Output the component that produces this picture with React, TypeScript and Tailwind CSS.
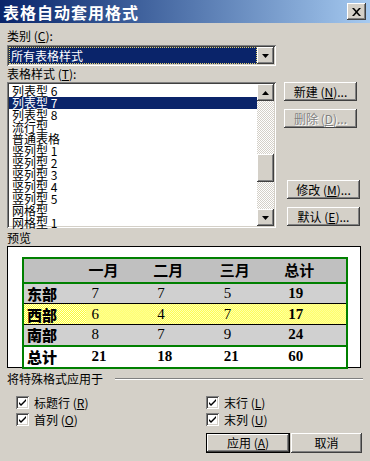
import type { ReactNode } from 'react';

const raised =
  'shadow-[inset_-1px_-1px_#404040,inset_1px_1px_#ffffff,inset_-2px_-2px_#808080,inset_2px_2px_#d4d0c8]';
const sunken =
  'shadow-[inset_1px_1px_#808080,inset_-1px_-1px_#ffffff,inset_2px_2px_#404040,inset_-2px_-2px_#d4d0c8]';

const font = "font-['Noto_Sans_CJK_SC','Noto_Sans',sans-serif]";

const listItems = [
  '列表型 6',
  '列表型 7',
  '列表型 8',
  '流行型',
  '普通表格',
  '竖列型 1',
  '竖列型 2',
  '竖列型 3',
  '竖列型 4',
  '竖列型 5',
  '网格型',
  '网格型 1',
];

const rows = [
  { name: '东部', values: [7, 7, 5, 19], bg: 'bg-[#d0d0d0]' },
  {
    name: '西部',
    values: [6, 4, 7, 17],
    bg: 'bg-[repeating-conic-gradient(#ffff33_0_25%,#ffffd0_0_50%)] bg-[length:2px_2px]',
  },
  { name: '南部', values: [8, 7, 9, 24], bg: 'bg-[#d0d0d0]' },
];

function Key({ children }: { children: ReactNode }) {
  return <span className="underline underline-offset-1">{children}</span>;
}

function Button({ label, k, className = '', disabled = false }: { label: string; k: string; className?: string; disabled?: boolean }) {
  return (
    <div
      className={`flex h-[19px] items-center justify-center bg-[#d4d0c8] text-[12px] leading-none ${raised} ${
        disabled ? 'text-[#808080] [text-shadow:1px_1px_#ffffff]' : 'text-black'
      } ${className}`}
    >
      {label} (<Key>{k}</Key>)...
    </div>
  );
}

function Arrow({ up }: { up?: boolean }) {
  return (
    <svg width="7" height="4" viewBox="0 0 7 4">
      <path d={up ? 'M3.5 0 L7 4 L0 4 Z' : 'M0 0 L7 0 L3.5 4 Z'} fill="#000" />
    </svg>
  );
}

function Check({ label, k }: { label: string; k: string }) {
  return (
    <div className="flex h-[13px] items-center gap-[5px] text-[12px] leading-none">
      <div className={`flex h-[13px] w-[13px] items-center justify-center bg-white ${sunken}`}>
        <svg width="7" height="7" viewBox="0 0 7 7">
          <path d="M0 3 L2 5 L7 0 L7 2 L2 7 L0 5 Z" fill="#000" />
        </svg>
      </div>
      <span>
        {label} (<Key>{k}</Key>)
      </span>
    </div>
  );
}

export default function App() {
  return (
    <div className={`h-[461px] w-[370px] overflow-hidden bg-[#d4d0c8] text-black ${font}`}>
      {/* title bar */}
      <div className="flex h-[23px] items-center justify-between bg-gradient-to-r from-[#0a246a] to-[#a6caf0] pl-[3px] pr-[4px]">
        <span className="text-[16px] font-bold leading-none tracking-[1px] text-white">表格自动套用格式</span>
        <div className={`flex h-[17px] w-[19px] items-center justify-center bg-[#d4d0c8] ${raised}`}>
          <svg width="9" height="8" viewBox="0 0 9 8">
            <path d="M0 0 L2 0 L4.5 2.8 L7 0 L9 0 L5.5 4 L9 8 L7 8 L4.5 5.2 L2 8 L0 8 L3.5 4 Z" fill="#000" />
          </svg>
        </div>
      </div>

      <div className="px-[7px]">
        <div className="mt-[7px] text-[12px] leading-[12px]">
          类别 (<Key>C</Key>):
        </div>
        <div className={`mt-[3px] flex h-[21px] w-[269px] items-center bg-white p-[2px] ${sunken}`}>
          <div className="flex h-full flex-1 items-center border border-dotted border-[#e0d070] bg-[#0a246a] px-[1px] text-[12px] leading-none text-white">
            所有表格样式
          </div>
          <div className={`flex h-[17px] w-[17px] items-center justify-center bg-[#d4d0c8] ${raised}`}>
            <Arrow />
          </div>
        </div>
        <div className="mt-[2px] text-[12px] leading-[12px]">
          表格样式 (<Key>T</Key>):
        </div>

        <div className="mt-[2px] flex">
          <div className={`flex h-[146px] w-[269px] bg-white p-[2px] ${sunken}`}>
            <div className="flex-1 pt-[1px]">
              {listItems.map((item, i) => (
                <div
                  key={item}
                  className={`h-[12px] pl-[3px] text-[12px] leading-[12px] ${i === 1 ? 'bg-[#0a246a] text-white' : ''}`}
                >
                  {item}
                </div>
              ))}
            </div>
            <div className="flex w-[17px] flex-col bg-[repeating-conic-gradient(#d4d0c8_0_25%,#ffffff_0_50%)] bg-[length:2px_2px]">
              <div className={`flex h-[17px] items-center justify-center bg-[#d4d0c8] ${raised}`}>
                <Arrow up />
              </div>
              <div className="h-[53px]" />
              <div className={`h-[28px] bg-[#d4d0c8] ${raised}`} />
              <div className="flex-1" />
              <div className={`flex h-[17px] items-center justify-center bg-[#d4d0c8] ${raised}`}>
                <Arrow />
              </div>
            </div>
          </div>
          <div className="ml-[8px] flex flex-col">
            <Button label="新建" k="N" className="w-[73px]" />
            <Button label="删除" k="D" className="mt-[8px] w-[73px]" disabled />
            <Button label="修改" k="M" className="ml-[3px] mt-[52px] w-[73px]" />
            <Button label="默认" k="E" className="ml-[3px] mt-[8px] w-[73px]" />
          </div>
        </div>

        <div className="mt-[4px] text-[12px] leading-[12px]">预览</div>
        <div className="mt-[2px] h-[122px] w-[354px] border border-black bg-white px-[14px] pt-[10px]">
          <table className="w-[326px] border-collapse">
            <colgroup>
              <col className="w-[63px]" />
              <col className="w-[66px]" />
              <col className="w-[67px]" />
              <col className="w-[65px]" />
              <col className="w-[65px]" />
            </colgroup>
            <tbody>
              <tr className="h-[23px] border-2 border-[#008000] bg-[#c0c0c0] text-[15px] font-bold">
                <td />
                <td className="pl-[3px]">一月</td>
                <td className="pl-[2px]">二月</td>
                <td className="pl-[2px]">三月</td>
                <td className="pl-[2px]">总计</td>
              </tr>
              {rows.map((r, ri) => (
                <tr
                  key={r.name}
                  className={`h-[21px] border-x-2 border-[#008000] ${ri > 0 ? 'border-t border-t-black' : ''} ${r.bg}`}
                >
                  <td className="pl-[3px] text-[15px] font-black leading-none">{r.name}</td>
                  {r.values.map((v, i) => (
                    <td
                      key={i}
                      className={`pl-[6px] font-['Liberation_Serif',serif] text-[15px] leading-none ${i === 3 ? 'font-bold' : ''}`}
                    >
                      {v}
                    </td>
                  ))}
                </tr>
              ))}
              <tr className="h-[22px] border-2 border-[#008000] bg-white">
                <td className="pl-[3px] text-[15px] font-black leading-none">总计</td>
                {[21, 18, 21, 60].map((v, i) => (
                  <td key={i} className="pl-[6px] font-['Liberation_Serif',serif] text-[15px] font-bold leading-none">
                    {v}
                  </td>
                ))}
              </tr>
            </tbody>
          </table>
        </div>

        <div className="mt-[4px] flex items-center gap-[12px]">
          <span className="text-[12px] leading-[14px]">将特殊格式应用于</span>
          <div className="h-[2px] flex-1 border-t border-b border-t-[#808080] border-b-white" />
        </div>

        <div className="mt-[10px] grid grid-cols-[190px_1fr] gap-y-[4px] pl-[9px]">
          <Check label="标题行" k="R" />
          <Check label="末行" k="L" />
          <Check label="首列" k="O" />
          <Check label="末列" k="U" />
        </div>

        <div className="mt-[7px] flex justify-end pr-[1px]">
          <div className="border border-black">
            <div className={`flex h-[18px] w-[82px] items-center justify-center bg-[#d4d0c8] text-[12px] leading-none ${raised}`}>
              应用 (<Key>A</Key>)
            </div>
          </div>
          <div className={`ml-[1px] flex h-[20px] w-[71px] items-center justify-center bg-[#d4d0c8] text-[12px] leading-none ${raised}`}>
            取消
          </div>
        </div>
      </div>
    </div>
  );
}
